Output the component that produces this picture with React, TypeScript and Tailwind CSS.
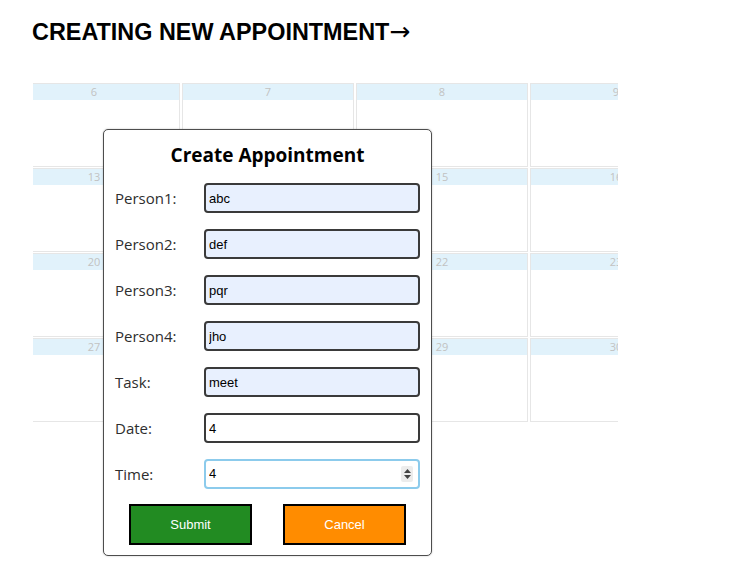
import React from 'react';

const rows = [
  [6, 7, 8, 9],
  [13, 14, 15, 16],
  [20, 21, 22, 23],
  [27, 28, 29, 30],
];

const fields = [
  { label: 'Person1:', value: 'abc', filled: true },
  { label: 'Person2:', value: 'def', filled: true },
  { label: 'Person3:', value: 'pqr', filled: true },
  { label: 'Person4:', value: 'jho', filled: true },
  { label: 'Task:', value: 'meet', filled: true },
  { label: 'Date:', value: '4', filled: false },
];

const DayCell: React.FC<{ day: number }> = ({ day }) => (
  <div className="h-[84px] border border-[#e6e6e6] bg-white">
    <div className="h-[16px] bg-[#e1f2fb] text-center text-[11px] leading-[16px] text-[#c2c2c2] font-['Open_Sans',sans-serif]">
      {day}
    </div>
  </div>
);

export default function App() {
  return (
    <div className="relative w-[743px] h-[588px] bg-white overflow-hidden">
      <h1 className="pl-[32px] pt-[19px] h-[45px] text-[23.4px] leading-[26px] font-bold text-black font-['Liberation_Sans',Arial,sans-serif]">
        CREATING NEW APPOINTMENT
        <span className="font-normal font-['DejaVu_Sans',sans-serif] text-[25px] leading-[20px]">→</span>
      </h1>

      {/* calendar, clipped on both sides */}
      <div className="ml-[33px] mt-[38px] w-[585px] overflow-hidden">
        <div className="-ml-[25px] grid grid-cols-[172px_172px_172px_172px] gap-x-[2px] gap-y-[1px] w-[694px]">
          {rows.flat().map((d) => (
            <DayCell key={d} day={d} />
          ))}
        </div>
      </div>

      {/* modal */}
      <div className="absolute left-[103px] top-[129px] w-[329px] h-[427px] rounded-[5px] border-[1.5px] border-[#4d4d4d] bg-white shadow-[0_0_2px_rgba(0,0,0,0.25)]">
        <h2 className="pt-[12px] text-center text-[19px] leading-[26px] font-bold text-black font-['Open_Sans',sans-serif]">
          Create Appointment
        </h2>
        <div className="mt-[15px] flex flex-col gap-[16px] pl-[11px]">
          {fields.map((f) => (
            <div key={f.label} className="flex items-center h-[30px]">
              <label className="w-[89px] text-[15px] text-[#2e2e2e] font-['Open_Sans',sans-serif]">
                {f.label}
              </label>
              <input
                readOnly
                value={f.value}
                className={`w-[216px] h-[30px] rounded-[4px] border-2 border-[#3a3a3a] px-[3px] text-[13px] text-black font-['Liberation_Sans',Arial,sans-serif] outline-none ${
                  f.filled ? 'bg-[#e8f0fe]' : 'bg-white'
                }`}
              />
            </div>
          ))}
          <div className="flex items-center h-[30px]">
            <label className="w-[89px] text-[15px] text-[#2e2e2e] font-['Open_Sans',sans-serif]">
              Time:
            </label>
            <div className="flex items-center w-[216px] h-[30px] rounded-[4px] border-2 border-[#8ccbec] bg-white pl-[3px] pr-[5px]">
              <input
                readOnly
                value="4"
                className="flex-1 min-w-0 bg-transparent text-[13px] text-black font-['Liberation_Sans',Arial,sans-serif] outline-none"
              />
              <span className="flex flex-col items-center justify-center w-[12px] h-[16px] bg-[#ececec] rounded-[2px] gap-[2px]">
                <svg width="7" height="4" viewBox="0 0 7 4">
                  <path d="M0 4 L3.5 0 L7 4 Z" fill="#444" />
                </svg>
                <svg width="7" height="4" viewBox="0 0 7 4">
                  <path d="M0 0 L3.5 4 L7 0 Z" fill="#444" />
                </svg>
              </span>
            </div>
          </div>
        </div>
        <div className="mt-[15px] flex gap-[31px] pl-[25px]">
          <button className="w-[123px] h-[41px] border-2 border-black bg-[#228b22] text-white text-[13px] font-['Liberation_Sans',Arial,sans-serif]">
            Submit
          </button>
          <button className="w-[123px] h-[41px] border-2 border-black bg-[#ff8c00] text-white text-[13px] font-['Liberation_Sans',Arial,sans-serif]">
            Cancel
          </button>
        </div>
      </div>
    </div>
  );
}
